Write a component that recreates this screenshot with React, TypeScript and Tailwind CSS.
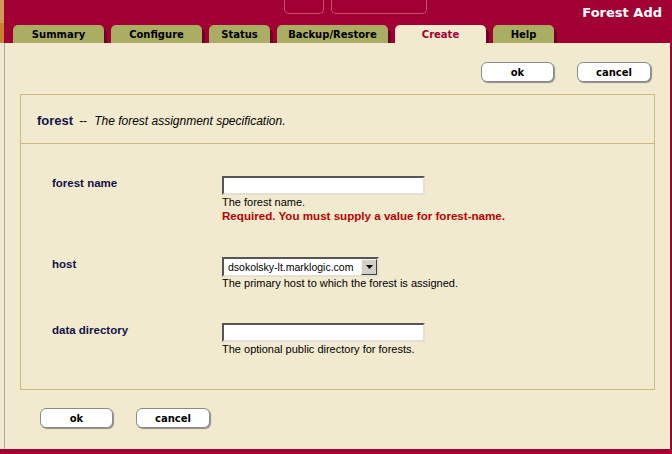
import React from "react";

const tabs: { label: string; w: string; active?: boolean }[] = [
  { label: "Summary", w: "w-[91px]" },
  { label: "Configure", w: "w-[91px]" },
  { label: "Status", w: "w-[61px]" },
  { label: "Backup/Restore", w: "w-[111px]" },
  { label: "Create", w: "w-[91px]", active: true },
  { label: "Help", w: "w-[61px]" },
];

function Btn({ label, w }: { label: string; w: string }) {
  return (
    <div
      className={`${w} h-[20px] bg-white border border-[#8a8a8a] rounded-[6px] shadow-[1px_1px_1px_#8c8c8c] flex items-center justify-center font-['DejaVu_Sans',sans-serif] font-bold text-[10px] text-black`}
    >
      {label}
    </div>
  );
}

function TextBox() {
  return (
    <div className="w-[203px] h-[19px] bg-white border-2 border-t-[#555555] border-l-[#555555] border-r-[#e4e0d8] border-b-[#e4e0d8]" />
  );
}

const help = "font-['Liberation_Sans',Arial,sans-serif] text-[11px] leading-[13px] text-black";
const label =
  "w-[170px] shrink-0 font-['Liberation_Sans',Arial,sans-serif] font-bold text-[11.5px] leading-[14px] text-[#12124a]";

export default function App() {
  return (
    <div className="w-[672px] h-[454px] bg-[#a10033] flex flex-col overflow-hidden">
      {/* header */}
      <div className="h-[43px] flex shrink-0">
        <div className="w-[4px] flex flex-col">
          <div className="h-[23px] bg-[#d29a58]" />
          <div className="flex-1 bg-[#c8812f]" />
        </div>
        <div className="flex-1 flex flex-col">
          <div className="h-[25px] flex items-start">
            <div className="ml-[280px] -mt-[1px] w-[40px] h-[15px] border border-t-0 border-[#c5506f] rounded-b-[5px]" />
            <div className="ml-[7px] -mt-[1px] w-[96px] h-[15px] border border-t-0 border-[#c5506f] rounded-b-[5px]" />
            <div className="ml-auto mr-[10px] mt-[5px] text-white font-bold text-[13px] leading-[16px] font-['DejaVu_Sans',sans-serif]">
              Forest Add
            </div>
          </div>
          <div className="h-[18px] flex gap-[7px] pl-[9px] overflow-hidden">
            {tabs.map((t) => (
              <div
                key={t.label}
                className={`${t.w} h-[18px] shrink-0 rounded-t-[5px] shadow-[3px_4px_0_#6c0026] flex items-center justify-center pt-[1px] font-['DejaVu_Sans',sans-serif] font-bold text-[10px] ${
                  t.active ? "bg-[#f2eacf] text-[#a10033]" : "bg-[#a9ae62] text-black"
                }`}
              >
                {t.label}
              </div>
            ))}
          </div>
        </div>
      </div>

      {/* body */}
      <div className="h-[406px] mr-[2px] bg-[#f2eacf] flex shrink-0">
        <div className="ml-[4px] flex-1 border-l border-[#a8a8a8] flex flex-col">
          <div className="pt-[19px] pr-[19px] flex justify-end gap-[23px]">
            <Btn label="ok" w="w-[73px]" />
            <Btn label="cancel" w="w-[74px]" />
          </div>

          <div className="mt-[12px] ml-[15px] mr-[15px] border border-[#cbbb80]">
            <div className="h-[49px] border-b border-[#cbbb80] flex items-center pl-[16px] pt-[4px] font-['Liberation_Sans',Arial,sans-serif]">
              <span className="font-bold text-[13px] text-[#12124a]">forest</span>
              <span className="ml-[6px] text-[12px] text-black">--</span>
              <span className="ml-[7px] italic text-[12px] text-black">
                The forest assignment specification.
              </span>
            </div>
            <div className="pt-[32px] pb-[33px] pl-[31px] flex flex-col">
              <div className="flex">
                <div className={label}>forest name</div>
                <div className="flex flex-col">
                  <TextBox />
                  <div className={`${help} mt-[1px]`}>The forest name.</div>
                  <div className="font-['Liberation_Sans',Arial,sans-serif] font-bold text-[11.6px] leading-[13px] text-[#bb0000]">
                    Required. You must supply a value for forest-name.
                  </div>
                </div>
              </div>

              <div className="flex mt-[35px]">
                <div className={label}>host</div>
                <div className="flex flex-col">
                  <div className="w-[157px] h-[20px] bg-white border-2 border-t-[#555555] border-l-[#555555] border-r-[#e4e0d8] border-b-[#e4e0d8] flex items-center">
                    <span className="flex-1 pl-[4px] font-['Liberation_Sans',Arial,sans-serif] text-[10.5px] text-black leading-[14px]">
                      dsokolsky-lt.marklogic.com
                    </span>
                    <div className="w-[16px] h-[16px] bg-[#d4d0c8] border border-t-[#f4f4f4] border-l-[#f4f4f4] border-r-[#404040] border-b-[#404040] flex items-center justify-center">
                      <svg width="7" height="4" viewBox="0 0 7 4">
                        <path d="M0 0h7L3.5 4z" fill="#000" />
                      </svg>
                    </div>
                  </div>
                  <div className={help}>The primary host to which the forest is assigned.</div>
                </div>
              </div>

              <div className="flex mt-[33px]">
                <div className={label}>data directory</div>
                <div className="flex flex-col">
                  <TextBox />
                  <div className={`${help} mt-[1px]`}>The optional public directory for forests.</div>
                </div>
              </div>
            </div>
          </div>

          <div className="mt-[18px] ml-[35px] flex gap-[23px]">
            <Btn label="ok" w="w-[73px]" />
            <Btn label="cancel" w="w-[74px]" />
          </div>
        </div>
      </div>
    </div>
  );
}
